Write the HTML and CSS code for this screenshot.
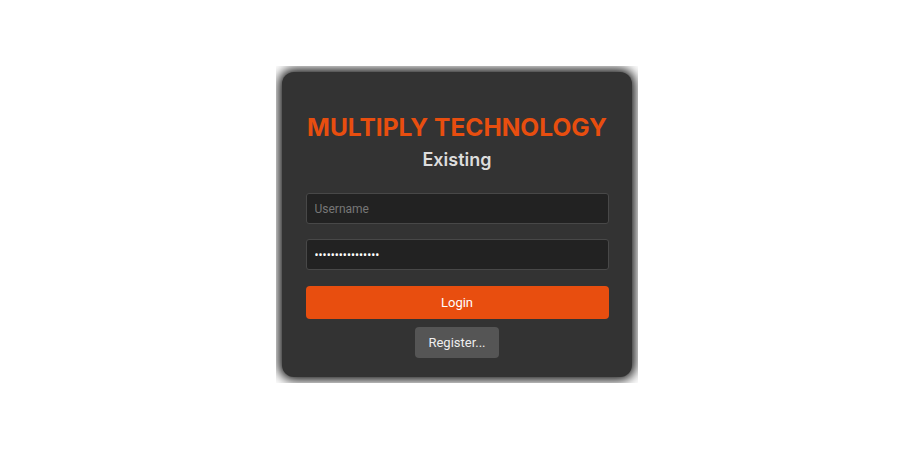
FILE: index.html
```html
<!DOCTYPE html>
<html>
<head>
<meta charset="utf-8">
<link rel="stylesheet" href="styles.css">
</head>
<body>
<div class="page">
  <div class="frame">
    <div class="card">
      <h1 class="title">MULTIPLY TECHNOLOGY</h1>
      <h2 class="subtitle">Existing</h2>
      <form class="form">
        <input class="field" type="text" placeholder="Username">
        <input class="field" type="password" value="passwordpassword">
        <button class="btn-login" type="button">Login</button>
        <button class="btn-register" type="button">Register...</button>
      </form>
    </div>
  </div>
</div>
</body>
</html>
```

FILE: styles.css
```css
html, body {
  margin: 0;
  padding: 0;
  background: #ffffff;
  font-family: Roboto, "Liberation Sans", sans-serif;
}
.page {
  display: flex;
  justify-content: center;
  padding-top: 66px;
  padding-left: 2px;
}
.frame {
  width: 362px;
  height: 317px;
  overflow: hidden;
  padding: 6px;
  box-sizing: border-box;
}
.card {
  height: 100%;
  box-sizing: border-box;
  background: #333333;
  border-radius: 12px;
  box-shadow: 0 0 12px 3px #0a0a0a;
  padding-top: 40px;
  display: flex;
  flex-direction: column;
  align-items: center;
}
.title {
  margin: 0;
  font-family: Inter, sans-serif;
  font-weight: 700;
  font-size: 24.5px;
  line-height: 30px;
  color: #e84e0f;
}
.subtitle {
  margin: 7px 0 0;
  font-family: Inter, sans-serif;
  font-weight: 600;
  font-size: 18px;
  line-height: 22px;
  color: #dddddd;
}
.form {
  margin-top: 22px;
  width: 303px;
  display: flex;
  flex-direction: column;
  align-items: center;
}
.field {
  width: 100%;
  height: 31px;
  box-sizing: border-box;
  background: #222222;
  border: 1px solid #484848;
  border-radius: 3px;
  color: #ffffff;
  font-family: Roboto, sans-serif;
  font-size: 12px;
  padding: 0 8px;
  margin: 0 0 15px;
  outline: none;
}
.field::placeholder {
  color: #777777;
}
.btn-login {
  width: 100%;
  height: 33px;
  margin-top: 1px;
  border: none;
  border-radius: 4px;
  background: #e84e0f;
  color: #ffffff;
  font-family: Roboto, sans-serif;
  font-size: 13px;
}
.btn-register {
  margin-top: 8px;
  width: 84px;
  height: 31px;
  border: none;
  border-radius: 4px;
  background: #555555;
  color: #eeeeee;
  font-family: Roboto, sans-serif;
  font-size: 13px;
}
```
